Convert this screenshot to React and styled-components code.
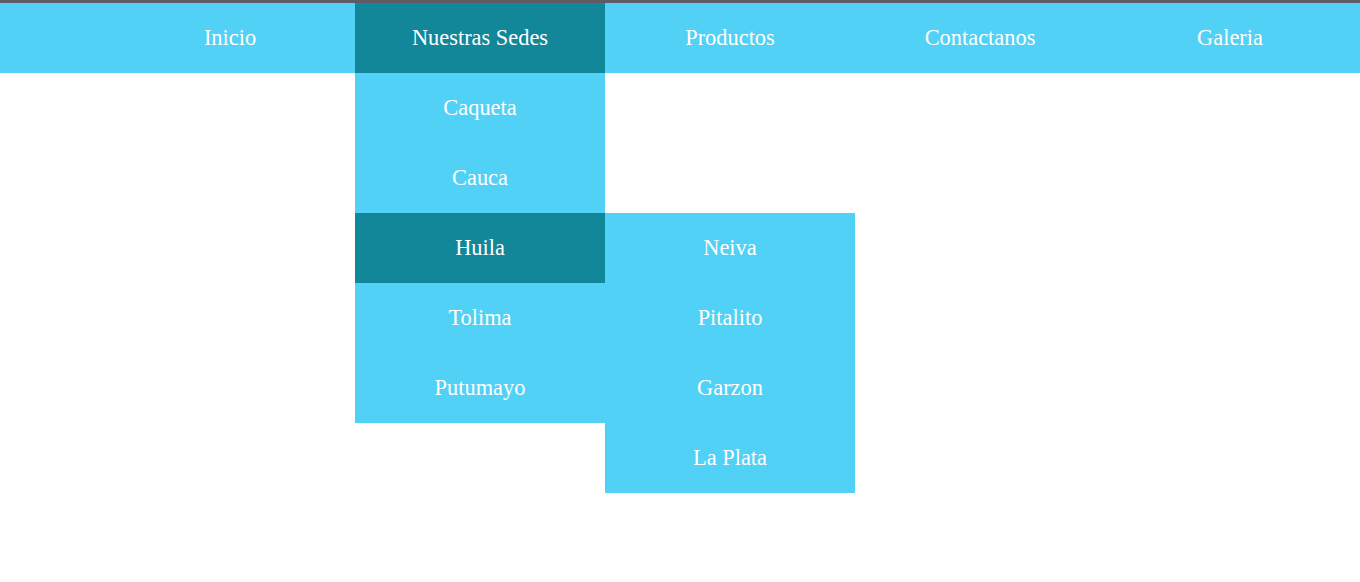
import styled, { createGlobalStyle } from 'styled-components';

const GlobalStyle = createGlobalStyle`
    body {
        margin: 0;
        font-family: "Liberation Serif", "Times New Roman", serif;
        background: #fff;
    }
`;

const TopLine = styled.div`
    height: 3px;
    background-color: #5d5b67;
`;

const NavBar = styled.nav`
    background: linear-gradient(to bottom, #51d1f5 0, #51d1f5 70px, transparent 70px);
    padding-bottom: 89px;
`;

const Menu = styled.ul`
    list-style: none;
    margin: 0;
    padding: 0 5px 0 0;
    display: flex;
    justify-content: flex-end;
    align-items: flex-start;
`;

const Column = styled.li`
    display: flex;
    flex-direction: column;
    width: 250px;
`;

const DropRow = styled.div`
    display: flex;
    align-items: flex-start;
`;

const List = styled.ul`
    list-style: none;
    margin: 0;
    padding: 0;
    width: 250px;
    display: flex;
    flex-direction: column;
`;

const Label = styled.div`
    width: 250px;
    height: 70px;
    line-height: 70px;
    text-align: center;
    font-size: 22.4px;
    color: #fff;
    background-color: ${props => props.$active ? '#128799' : '#51d1f5'};
    cursor: pointer;
`;

const menu = [
    { label: 'Inicio' },
    {
        label: 'Nuestras Sedes',
        active: true,
        children: [
            { label: 'Caqueta' },
            { label: 'Cauca' },
            { label: 'Huila', active: true, children: [
                { label: 'Neiva' },
                { label: 'Pitalito' },
                { label: 'Garzon' },
                { label: 'La Plata' },
            ] },
            { label: 'Tolima' },
            { label: 'Putumayo' },
        ],
    },
    { label: 'Productos' },
    { label: 'Contactanos' },
    { label: 'Galeria' },
];

const Dropdown = ({ items }) => {
    const openIndex = items.findIndex(i => i.active && i.children);
    const open = items[openIndex];
    return (
        <DropRow>
            <List>
                {items.map(item => (
                    <li key={item.label}><Label $active={item.active}>{item.label}</Label></li>
                ))}
            </List>
            {open && (
                <List style={{ marginTop: openIndex * 70 }}>
                    {open.children.map(child => (
                        <li key={child.label}><Label $active={child.active}>{child.label}</Label></li>
                    ))}
                </List>
            )}
        </DropRow>
    );
};

export default function App() {
    return (
        <>
            <GlobalStyle />
            <TopLine />
            <NavBar>
                <Menu>
                    {menu.map(item => (
                        <Column key={item.label}>
                            <Label $active={item.active}>{item.label}</Label>
                            {item.active && item.children && <Dropdown items={item.children} />}
                        </Column>
                    ))}
                </Menu>
            </NavBar>
        </>
    );
}
